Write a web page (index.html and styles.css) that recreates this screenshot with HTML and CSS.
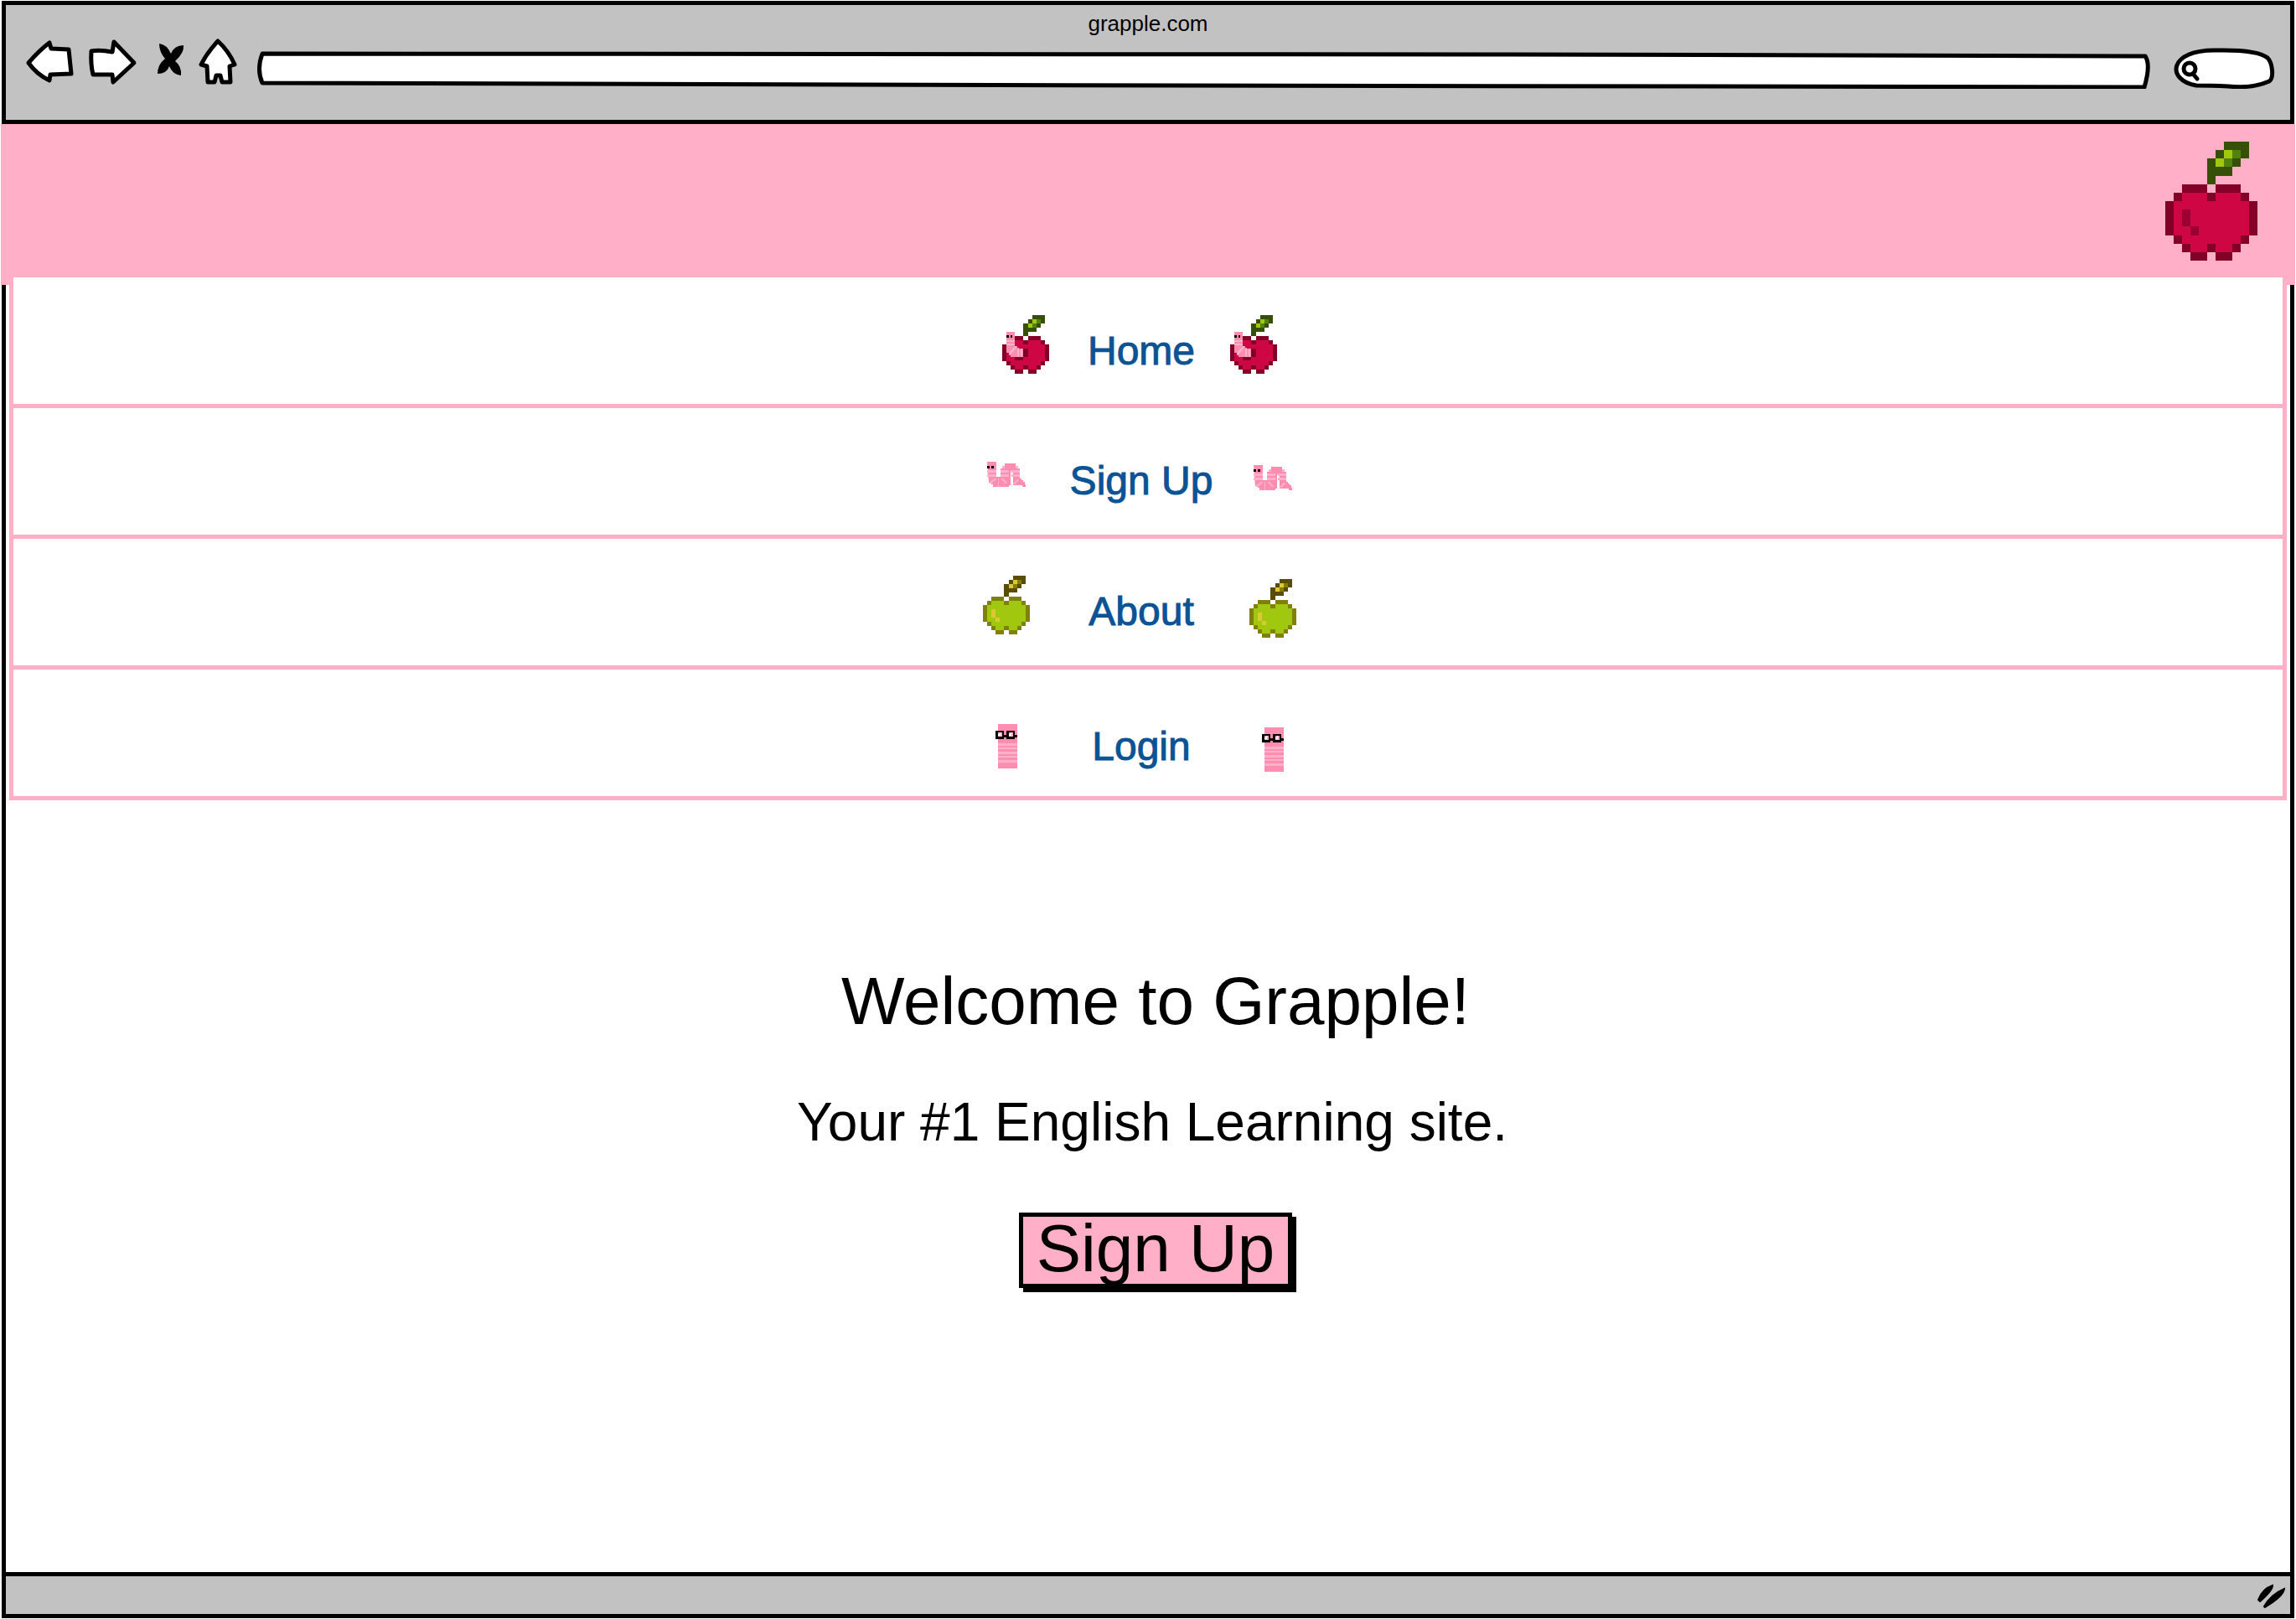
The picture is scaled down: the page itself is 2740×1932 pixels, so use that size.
FILE: index.html
```html
<!DOCTYPE html>
<html lang="en">
<head>
<meta charset="utf-8">
<meta name="viewport" content="width=device-width, initial-scale=1">
<title>Grapple</title>
<link rel="stylesheet" href="styles.css">
</head>
<body>
<svg class="sprites" aria-hidden="true">
  <symbol id="apple" viewBox="0 0 11 14" preserveAspectRatio="none">
    <path class="leaf" d="M7 0h3v2h-1v1h-1v1h-2v1h-1v-3h1v-1h1z"/>
    <path class="leaf-light" d="M7 1h1v1h-1v1h-1v-1h1z"/>
    <path class="leaf-mid" d="M8 1h1v1h-1v1h-1v-1h1z"/>
    <path class="skin" d="M2 5h3v1h1v-1h3v1h1v1h1v4h-1v1h-1v1h-1v1h-2v-1h-1v1h-2v-1h-1v-1h-1v-1h-1v-4h1v-1h1z"/>
    <path class="flesh" d="M2 6h3v1h1v-1h3v1h1v4h-1v1h-1v1h-2v-1h-1v1h-2v-1h-1v-1h-1v-4h1z"/>
    <path class="shade" d="M2 8h1v2h1v1h-1v-1h-1z"/>
  </symbol>
  <symbol id="apple-worm" viewBox="0 0 56 70" preserveAspectRatio="none">
    <use href="#apple" width="56" height="70"/>
    <path fill="#cf0644" d="M10 40h15v15h-15z"/>
    <path fill="#820028" d="M25 40h6v10h-6v4h-10v-4h10z"/>
    <path fill="#ff8cb1" d="M5 20h10v17h3v2h2v1h5v10h-15v-2h-2v-3h-3z"/>
    <path fill="#ffb0ca" d="M5 30h10v2h-10zM5 34h10v2h-10zM8 45l7-8h2v2l-7 8h-2zM18 40h2v10h-2zM22 40h2v10h-2z"/>
    <path d="M5 24h3v3h-3zM10 24h2v3h-2z"/>
  </symbol>
  <symbol id="worm" viewBox="0 0 46 30">
    <path fill="#ff8cb1" d="M0 0h11v18h5v-10h2v-3h3v-3h13v3h3v3h2v12h2v2h2v2h2v3h3v3h-6v-2h-11v-17h-3v17h-2v2h-19v-3h-2v-2h-3z"/>
    <path fill="#ffb0ca" d="M0 10h11v3h-11zM0 15h11v3h-11zM16 10h10v3h-10zM16 15h10v3h-10zM29 10h10v3h-10zM29 15h10v3h-10zM18 5h3v3h-3zM34 5h3v3h-3zM3 24l6-4h2v1l-6 5h-2zM13 20h1v10h-1zM17 20h2l5 5v1h-2l-5-5zM31 26l5-5h2v1l-5 5h-2z"/>
    <path d="M0 5h3v3h-3zM5 5h3v3h-3z"/>
  </symbol>
  <symbol id="reader" viewBox="0 0 26 53">
    <path fill="#ff8cb1" d="M3 0h23v53h-23z"/>
    <path fill="#ffb0ca" d="M3 23h23v3h-23zM3 28h23v2h-23zM3 33h23v3h-23zM3 38h23v2h-23zM3 43h23v3h-23z"/>
    <path d="M0 8h10v5h3v-5h10v5h3v3h-3v2h-10v-2h-3v2h-10z"/>
    <path fill="#ffb0ca" d="M3 10h5v5h-5zM16 10h5v5h-5z"/>
    <path fill="#fff" d="M3 12h2v-2h1v4h-3zM16 12h2v-2h1v4h-3z"/>
  </symbol>
</svg>

<div class="window">
  <header class="chrome">
    <p class="chrome-title">grapple.com</p>
    <div class="toolbar">
      <button class="tool" type="button" aria-label="Back">
        <svg class="ink" width="58" height="60" viewBox="0 0 58 60"><path d="M4 29Q17 14 29 5L31 12 52 13 55 42 30 43 29 50Q14 43 4 29Z"/></svg>
      </button>
      <button class="tool" type="button" aria-label="Forward">
        <svg class="ink" width="60" height="60" viewBox="0 0 60 60"><path d="M5 15Q15 13 30 16L32 4 56 29 31 52 30 43H7Q4 31 5 15Z"/></svg>
      </button>
      <button class="tool" type="button" aria-label="Stop">
        <svg width="40" height="60" viewBox="0 0 40 60"><path d="M10 6Q19 7 24 18Q28 8 39 8Q40 17 29 27Q37 33 36 44Q26 43 22 33Q19 42 8 42Q8 31 17 24Q10 16 10 6Z"/></svg>
      </button>
      <button class="tool" type="button" aria-label="Home page">
        <svg class="ink" width="48" height="60" viewBox="0 0 48 60"><path d="M24 3Q37 15 44 31L38 33 39 52H29L27 44H22L20 52H12L11 33 4 31Q11 17 24 3Z"/></svg>
      </button>
      <label class="field address">
        <svg class="ink field-frame" viewBox="0 0 2264 60" preserveAspectRatio="none" aria-hidden="true"><path vector-effect="non-scaling-stroke" d="M8 18L1500 19 2257 21Q2264 31 2256 58L1100 56 8 53Q1 37 8 18Z"/></svg>
        <input class="field-input" type="text" aria-label="Address">
      </label>
      <label class="field search">
        <svg class="ink field-frame" viewBox="0 0 124 60" aria-hidden="true"><path d="M28 56C-8 50-6 13 52 14Q101 13 113 23C119 29 121 47 115 51Q94 60 66 57Q45 56 28 56Z"/><circle cx="20" cy="36" r="7"/><path d="M24 42l5 6"/></svg>
        <input class="field-input" type="search" aria-label="Search">
      </label>
    </div>
  </header>

  <div class="banner">
    <svg class="logo red" width="110" height="142" role="img" aria-label="Grapple logo"><use href="#apple"/></svg>
  </div>

  <nav class="menu">
    <a class="item item-near" href="#home">
      <svg class="red" width="56" height="70"><use href="#apple-worm"/></svg>
      <span>Home</span>
      <svg class="red" width="56" height="70"><use href="#apple-worm"/></svg>
    </a>
    <a class="item" href="#signup">
      <svg width="46" height="30"><use href="#worm"/></svg>
      <span>Sign Up</span>
      <svg class="low" width="46" height="30"><use href="#worm"/></svg>
    </a>
    <a class="item" href="#about">
      <svg class="green" width="56" height="70"><use href="#apple"/></svg>
      <span>About</span>
      <svg class="green low" width="56" height="70"><use href="#apple"/></svg>
    </a>
    <a class="item item-deep" href="#login">
      <svg width="26" height="53"><use href="#reader"/></svg>
      <span>Login</span>
      <svg class="low" width="26" height="53"><use href="#reader"/></svg>
    </a>
  </nav>

  <main class="hero">
    <h1>Welcome to Grapple!</h1>
    <p>Your #1 English Learning site.</p>
    <button class="cta" type="button">Sign Up</button>
  </main>

  <footer class="status">
    <svg width="36" height="30" viewBox="0 0 36 30" aria-hidden="true"><path d="M2 20Q7 7 19 3Q19 9 4 22ZM9 28Q17 14 33 7Q32 16 10 29Z" stroke="#000" stroke-width="2"/></svg>
  </footer>
</div>
</body>
</html>
```
FILE: styles.css
```css
* { box-sizing: border-box; }

:root {
  --ink: #000;
  --gray: #c2c2c2;
  --pink: #ffafc7;
  --blue: #0b5394;
}

body {
  margin: 0;
  background: #fff;
  color: var(--ink);
  font-family: "Liberation Sans", Arial, sans-serif;
}

svg { display: block; flex: none; }
.sprites { position: absolute; width: 0; height: 0; }

.window {
  display: flex;
  flex-direction: column;
  min-height: calc(100vh - 2px);
  margin: 1px 2px;
  border: 5px solid var(--ink);
}

/* Browser chrome */
.chrome {
  padding: 4px 16px 37px 23px;
  background: var(--gray);
  border-bottom: 5px solid var(--ink);
}
.chrome-title {
  margin: 0;
  padding-right: 7px;
  font-size: 26px;
  line-height: 36px;
  text-align: center;
}
.toolbar { display: flex; gap: 16px; height: 60px; }
.tool {
  padding: 0;
  border: 0;
  background: none;
}
.ink {
  fill: #fff;
  stroke: var(--ink);
  stroke-width: 5;
  stroke-linejoin: round;
  stroke-linecap: round;
}
.field { display: grid; }
.field-frame, .field-input { grid-area: 1 / 1; }
.field-frame { width: 100%; height: 60px; }
.field-input {
  align-self: center;
  width: auto;
  min-width: 0;
  height: 28px;
  margin: 8px 12px 0;
  padding: 0;
  border: 0;
  outline: 0;
  background: transparent;
  font: inherit;
  font-size: 26px;
}
.address { flex: 1; margin: 0 10px 0 5px; }
.search { width: 124px; }
.search .field-input { margin: 8px 16px 0 36px; }

/* Site banner */
.banner {
  display: flex;
  justify-content: flex-end;
  margin: 0 -6px;
  padding: 21px 45px 20px;
  background: var(--pink);
}
.red { --leaf: #375008; --leaf-light: #a0c80f; --leaf-mid: #508210; --skin: #820028; --flesh: #cf0644; --shade: #9b0032; }
.green { --leaf: #5a4b05; --leaf-light: #dcc832; --leaf-mid: #827d05; --skin: #80800a; --flesh: #a0c80f; --shade: #dcc832; }
.leaf { fill: var(--leaf); }
.leaf-light { fill: var(--leaf-light); }
.leaf-mid { fill: var(--leaf-mid); }
.skin { fill: var(--skin); }
.flesh { fill: var(--flesh); }
.shade { fill: var(--shade); }
.leaf, .leaf-light, .leaf-mid, .skin, .flesh, .shade { shape-rendering: crispEdges; }

/* Menu */
.menu {
  position: relative;
  margin: 0 4px;
  border: solid var(--pink);
  border-width: 0 5px;
}
.menu::before, .menu::after {
  content: "";
  position: absolute;
  top: 0;
  width: 15px;
  height: 9px;
  background: var(--pink);
}
.menu::before { left: -15px; }
.menu::after { right: -15px; }
.item {
  display: grid;
  grid-template-columns: 56px 262px 56px;
  justify-content: center;
  justify-items: center;
  align-items: center;
  height: 156px;
  padding: 6px 20px 0 0;
  border-bottom: 5px solid var(--pink);
  color: var(--blue);
  font-size: 48px;
  line-height: 56px;
  text-decoration: none;
  -webkit-text-stroke: 1px var(--blue);
}
.item svg { -webkit-text-stroke: 0; }
.item span { padding: 16px 0 0 4px; }
.item-near { grid-template-columns: 56px 216px 56px; padding-top: 8px; }
.item-deep { padding-top: 32px; }
.item-deep span { padding-top: 0; }
.low { margin-top: 8px; }

/* Welcome */
.hero {
  display: flex;
  flex: 1;
  flex-direction: column;
  align-items: center;
  padding: 192px 0 80px 18px;
}
.hero h1 {
  margin: 0;
  font-size: 80px;
  font-weight: 400;
  line-height: 96px;
}
.hero p {
  margin: 56px 0 0;
  padding-right: 8px;
  font-size: 64px;
  line-height: 80px;
}
.cta {
  margin: 68px 0 0;
  padding: 0 16px 4px;
  border: 5px solid var(--ink);
  background: var(--pink);
  box-shadow: 5px 5px 0 var(--ink);
  color: var(--ink);
  font: inherit;
  font-size: 80px;
  line-height: 76px;
}

.status {
  display: flex;
  justify-content: flex-end;
  align-items: center;
  height: 50px;
  padding-right: 4px;
  background: var(--gray);
  border-top: 5px solid var(--ink);
}
```
